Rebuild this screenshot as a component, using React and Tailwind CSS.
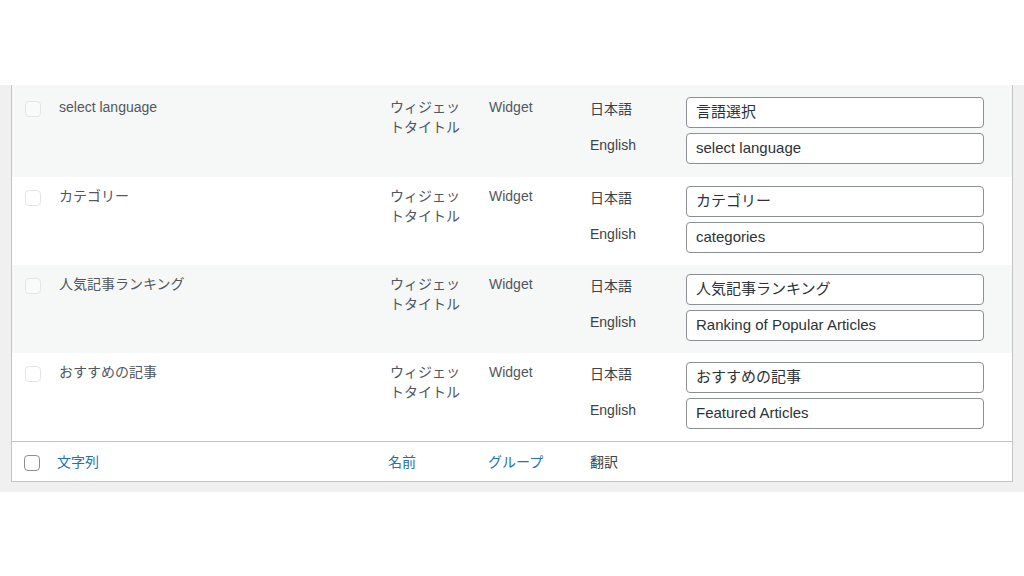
import React from "react";

const rows = [
  { name: "select language", ja: "言語選択", en: "select language", striped: true, first: true },
  { name: "カテゴリー", ja: "カテゴリー", en: "categories", striped: false },
  { name: "人気記事ランキング", ja: "人気記事ランキング", en: "Ranking of Popular Articles", striped: true },
  { name: "おすすめの記事", ja: "おすすめの記事", en: "Featured Articles", striped: false },
];

function Row({ r }) {
  return (
    <div
      className={`grid grid-cols-[37px_331px_99px_101px_1fr] ${r.striped ? "bg-[#f6f7f7]" : "bg-white"} ${r.first ? "h-[92px] pt-[12px]" : "h-[88px] pt-[9px]"}`}
    >
      <div className="pl-[13px] pt-[4px]">
        <div className="w-4 h-4 rounded-[4px] border border-[#e3e5e8] bg-white/40" />
      </div>
      <div className="px-[10px] text-[14px] leading-5 text-[#50575e]">{r.name}</div>
      <div className="px-[10px] text-[14px] leading-5 text-[#50575e]">ウィジェットタイトル</div>
      <div className="px-[10px] text-[14px] leading-5 text-[#50575e]">Widget</div>
      <div className="pl-[10px] flex flex-col gap-[5px]">
        <div className="flex">
          <div className="w-[96px] pt-[2px] text-[14px] leading-5 text-[#3c434a]">日本語</div>
          <div className="w-[298px] h-[31px] border border-[#8c8f94] rounded-[4px] bg-white pl-[9px] flex items-center text-[15px] text-[#2c3338]">
            {r.ja}
          </div>
        </div>
        <div className="flex">
          <div className="w-[96px] pt-[2px] text-[14px] leading-5 text-[#3c434a]">English</div>
          <div className="w-[298px] h-[31px] border border-[#8c8f94] rounded-[4px] bg-white pl-[9px] flex items-center text-[15px] text-[#2c3338]">
            {r.en}
          </div>
        </div>
      </div>
    </div>
  );
}

export default function App() {
  return (
    <div
      className="w-[1024px] h-[576px] bg-white overflow-hidden"
      style={{ fontFamily: '"Liberation Sans", "Noto Sans CJK JP", sans-serif' }}
    >
      <div className="h-[85px]" />
      <div className="bg-[#f0f0f1] px-[11px] pb-[10px]">
        <div className="border-x border-b border-[#c3c4c7] bg-white">
          {rows.map((r, i) => (
            <Row key={i} r={r} />
          ))}
          <div className="grid grid-cols-[37px_331px_99px_101px_1fr] h-[40px] border-t border-[#c3c4c7] items-center bg-white">
            <div className="pl-[12px] pt-[3px]">
              <div className="w-4 h-4 rounded-[4px] border border-[#8c8f94] bg-white" />
            </div>
            <div className="pl-[8px] text-[14px] leading-5 text-[#2271b1]">文字列</div>
            <div className="pl-[8px] text-[14px] leading-5 text-[#2271b1]">名前</div>
            <div className="pl-[9px] text-[14px] leading-5 text-[#2271b1]">グループ</div>
            <div className="pl-[10px] text-[14px] leading-5 text-[#3c434a]">翻訳</div>
          </div>
        </div>
      </div>
    </div>
  );
}
